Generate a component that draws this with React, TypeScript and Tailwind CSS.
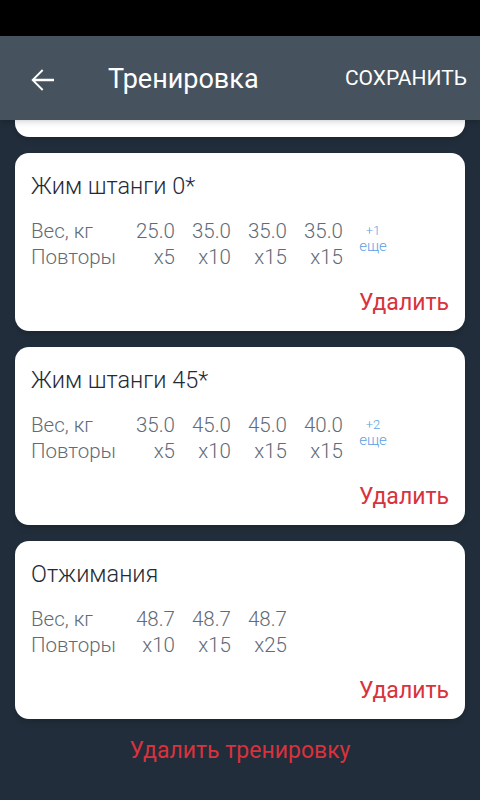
type Exercise = {
  name: string;
  weights: string[];
  reps: string[];
  more?: number;
};

const exercises: Exercise[] = [
  { name: 'Жим штанги 0*', weights: ['25.0', '35.0', '35.0', '35.0'], reps: ['x5', 'x10', 'x15', 'x15'], more: 1 },
  { name: 'Жим штанги 45*', weights: ['35.0', '45.0', '45.0', '40.0'], reps: ['x5', 'x10', 'x15', 'x15'], more: 2 },
  { name: 'Отжимания', weights: ['48.7', '48.7', '48.7'], reps: ['x10', 'x15', 'x25'] },
];

function ExerciseCard({ ex }: { ex: Exercise }) {
  return (
    <div className="bg-white rounded-[14px] shadow-md pt-[18px] pb-[13px] pl-4 pr-[16px]">
      <div className="text-[23.5px] leading-[30px] font-light text-[#1f2b37]">{ex.name}</div>
      <div className="flex mt-[17px] text-[20.5px] leading-[26px] font-light text-[#5f6b77]">
        <div className="w-[88px] flex flex-col">
          <span>Вес, кг</span>
          <span>Повторы</span>
        </div>
        {ex.weights.map((w, i) => (
          <div key={i} className="w-[56px] flex flex-col items-end">
            <span>{w}</span>
            <span>{ex.reps[i]}</span>
          </div>
        ))}
        {ex.more && (
          <div className="ml-[12px] w-[36px] flex flex-col items-center pt-[6px] text-[#5b9fe3]">
            <span className="text-[13px] leading-[14px]">+{ex.more}</span>
            <span className="text-[15px] leading-[17px]">еще</span>
          </div>
        )}
      </div>
      <div className="flex justify-end mt-[18px]">
        <span className="text-[23px] leading-[30px] text-[#d8323d]">Удалить</span>
      </div>
    </div>
  );
}

export default function App() {
  return (
    <div className="min-h-screen bg-[#212d3a] flex flex-col" style={{ fontFamily: 'Roboto, "Noto Sans", sans-serif' }}>
      <div className="h-[36px] bg-black" />
      <div className="h-[84px] bg-[#46525e] flex items-center shadow-md z-10 relative">
        <svg width="36" height="36" viewBox="0 0 24 24" className="ml-[24px] mt-[4px]" fill="#ffffff">
          <path d="M20 11.2H7.5l5.4-5.4L12 4.9 4.9 12l7.1 7.1.9-.9-5.4-5.4H20z" />
        </svg>
        <span className="ml-[48px] text-[27px] text-white mt-[2px]">Тренировка</span>
        <span className="ml-auto mr-[13px] text-[21px] text-white mt-[2px]">СОХРАНИТЬ</span>
      </div>
      <div className="px-[15px] flex flex-col gap-4">
        <div className="h-[17px] bg-white rounded-b-[14px] shadow-md" />
        {exercises.map((ex, i) => (
          <ExerciseCard key={i} ex={ex} />
        ))}
      </div>
      <div className="flex justify-center mt-[17px]">
        <span className="text-[23px] leading-[30px] text-[#d8323d]">Удалить тренировку</span>
      </div>
    </div>
  );
}
